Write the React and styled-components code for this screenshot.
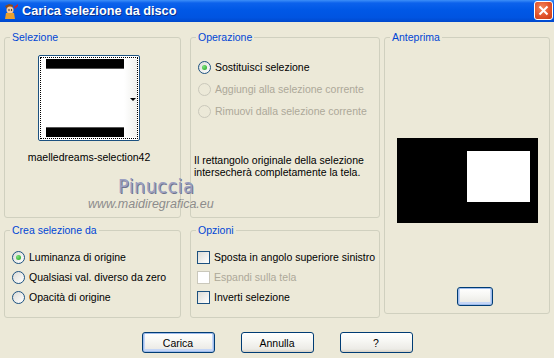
import React from "react";
import styled, { createGlobalStyle, css } from "styled-components";

const Global = createGlobalStyle`
  html, body { margin: 0; padding: 0; background: #ECE9D8; }
  body { font-family: "Liberation Sans", Arial, sans-serif; font-size: 10.5px; color: #000; }
`;

const Window = styled.div`
  position: relative;
  width: 554px;
  height: 358px;
  background: #ECE9D8;
  display: flex;
  flex-direction: column;
  overflow: hidden;
`;

const TitleBar = styled.div`
  height: 22px;
  flex: none;
  display: flex;
  align-items: center;
  padding-left: 3px;
  gap: 3px;
  background: linear-gradient(#3d8ff8 0, #0c62ec 3px, #0058e6 45%, #0054e1 80%, #0048cc 100%);
`;

const Title = styled.div`
  flex: 1;
  color: #fff;
  font-weight: bold;
  font-size: 12.7px;
  text-shadow: 1px 1px 0 #0a2f8a;
  white-space: nowrap;
`;

const CloseButton = styled.div`
  width: 17px;
  height: 17px;
  margin-right: 1px;
  margin-top: -2px;
  border: 1px solid #fff;
  border-radius: 3px;
  background: radial-gradient(circle at 40% 35%, #f2885f 0, #e2522a 55%, #c63a12 100%);
  display: flex;
  align-items: center;
  justify-content: center;
`;

const Body = styled.div`
  flex: 1;
  display: flex;
  flex-direction: column;
  padding: 8px 0 0 4px;
`;

const Grid = styled.div`
  display: grid;
  grid-template-columns: 186px 194px 166px;
  grid-template-rows: 188px 95px;
  row-gap: 5px;
`;

const Group = styled.fieldset`
  margin: 0;
  padding: 0 6px;
  border: 1px solid #D0D0BF;
  border-radius: 3px;
  box-sizing: border-box;
  min-width: 0;
  width: ${(p) => p.$w}px;
  height: ${(p) => p.$h}px;
  display: flex;
  flex-direction: column;
  ${(p) => p.$span && css`grid-row: 1 / span 2; grid-column: 3;`}
`;

const Legend = styled.legend`
  margin-left: -1px;
  padding: 0 2px;
  color: #0046D5;
  line-height: 14px;
  font-size: 10.5px;
`;

const SelContent = styled.div`
  display: flex;
  flex-direction: column;
  align-items: center;
  padding-right: 7px;
  padding-top: 11px;
`;

const Thumb = styled.div`
  width: 102px;
  height: 86px;
  box-sizing: border-box;
  border: 1px solid #1C5180;
  border-radius: 2px;
  background: #fff;
  padding: 1px;
`;

const ThumbInner = styled.div`
  height: 100%;
  box-sizing: border-box;
  border: 1px dotted #000;
  display: flex;
  padding: 1px 0 1px 5px;
`;

const ThumbImage = styled.div`
  width: 78px;
  display: flex;
  flex-direction: column;
  justify-content: space-between;
`;

const Bar = styled.div`
  height: 9px;
  background: #000;
  border-${(p) => (p.$bottom ? "top" : "bottom")}: 1px solid #555;
`;

const ThumbSide = styled.div`
  flex: 1;
  background: linear-gradient(90deg, #ffffff, #f0f0ec);
  display: flex;
  align-items: center;
  justify-content: flex-end;
  padding-right: 1px;
`;

const Arrow = styled.div`
  width: 0;
  height: 0;
  border-left: 3px solid transparent;
  border-right: 3px solid transparent;
  border-top: 3px solid #000;
  margin-top: 2px;
`;

const FileName = styled.div`
  margin-top: 9px;
  line-height: 14px;
`;

const Options = styled.div`
  display: flex;
  flex-direction: column;
  padding-top: ${(p) => p.$top}px;
`;

const Row = styled.label`
  display: flex;
  align-items: center;
  gap: 4px;
  height: ${(p) => p.$h}px;
  color: ${(p) => (p.$disabled ? "#ACA899" : "#000")};
  white-space: nowrap;
`;

const Radio = styled.span`
  width: 13px;
  height: 13px;
  box-sizing: border-box;
  border-radius: 50%;
  border: 1px solid ${(p) => (p.$disabled ? "#CAC8BB" : "#1C5180")};
  background: ${(p) => (p.$disabled ? "transparent" : "linear-gradient(135deg, #dcdcd7, #ffffff)")};
  display: flex;
  align-items: center;
  justify-content: center;
  flex: none;
  margin-left: 1px;
`;

const Dot = styled.span`
  width: 5px;
  height: 5px;
  border-radius: 50%;
  background: radial-gradient(circle at 35% 35%, #7be27a, #21a121);
`;

const Check = styled.span`
  width: 13px;
  height: 13px;
  box-sizing: border-box;
  border: 1px solid ${(p) => (p.$disabled ? "#CAC8BB" : "#1C5180")};
  background: ${(p) => (p.$disabled ? "#fff" : "linear-gradient(135deg, #dcdcd7, #ffffff)")};
  flex: none;
`;

const Note = styled.p`
  margin: 32px 0 0 -3px;
  line-height: 12px;
`;

const PreviewContent = styled.div`
  display: flex;
  flex-direction: column;
  align-items: center;
  padding-top: 94px;
`;

const PreviewBox = styled.div`
  width: 141px;
  height: 85px;
  background: #000;
  display: flex;
  padding: 13px 0 0 70px;
  box-sizing: border-box;
`;

const PreviewSel = styled.div`
  width: 63px;
  height: 51px;
  background: #fff;
`;

const XPButton = styled.button`
  font-family: "Liberation Sans", Arial, sans-serif;
  font-size: 10.5px;
  color: #000;
  width: ${(p) => p.$w}px;
  height: ${(p) => p.$h}px;
  padding: 0;
  border: 1px solid #003C74;
  border-radius: 3px;
  background: linear-gradient(#ffffff 0, #f7f7f4 40%, #ecebe6 85%, #d6d0c5 100%);
  box-shadow: ${(p) => (p.$default ? "inset 0 0 0 1px #9fbcec, inset 0 -1px 0 2px #c5d6f6" : "none")};
`;

const SmallButton = styled(XPButton)`
  margin-top: 64px;
  margin-left: 16px;
`;

const ButtonRow = styled.div`
  display: flex;
  justify-content: center;
  gap: 26px;
  margin-top: 14px;
  margin-left: -4px;
`;

const Watermark = styled.div`
  position: absolute;
  left: 88px;
  top: 176px;
  display: flex;
  flex-direction: column;
  align-items: flex-start;
  pointer-events: none;
`;

const WmName = styled.div`
  font-family: "DejaVu Sans Condensed", "DejaVu Sans", sans-serif;
  font-size: 19.5px;
  color: #9a9fc0;
  text-shadow: 1px 1px 0 #6f7390;
  line-height: 22px;
  margin-left: 30px;
  letter-spacing: 0.5px;
`;

const WmUrl = styled.div`
  font-size: 12.5px;
  font-style: italic;
  color: #8c8c8c;
  line-height: 13px;
`;

const AppIcon = () => (
  <svg width="16" height="16" viewBox="0 0 16 16">
    <path d="M2 3 L6 1 L10 2 L9 6 L4 6 Z" fill="#8a4a1c" />
    <ellipse cx="7" cy="7" rx="3.5" ry="3.5" fill="#f3c9a0" />
    <path d="M3 10 L11 10 L12 16 L2 16 Z" fill="#e8a030" />
    <path d="M11 4 L15 1 L15 3 L12 6 Z" fill="#d02020" />
    <circle cx="6" cy="7" r="0.7" fill="#000" />
    <circle cx="8.5" cy="7" r="0.7" fill="#000" />
  </svg>
);

export default function App() {
  return (
    <>
      <Global />
      <Window>
        <TitleBar>
          <AppIcon />
          <Title>Carica selezione da disco</Title>
          <CloseButton>
            <svg width="11" height="11" viewBox="0 0 11 11">
              <path d="M1.5 1.5 L9.5 9.5 M9.5 1.5 L1.5 9.5" stroke="#fff" strokeWidth="2" />
            </svg>
          </CloseButton>
        </TitleBar>
        <Body>
          <Grid>
            <Group $w={177} $h={188}>
              <Legend>Selezione</Legend>
              <SelContent>
                <Thumb>
                  <ThumbInner>
                    <ThumbImage>
                      <Bar />
                      <Bar $bottom />
                    </ThumbImage>
                    <ThumbSide>
                      <Arrow />
                    </ThumbSide>
                  </ThumbInner>
                </Thumb>
                <FileName>maelledreams-selection42</FileName>
              </SelContent>
            </Group>
            <Group $w={190} $h={188}>
              <Legend>Operazione</Legend>
              <Options $top={12}>
                <Row $h={22}>
                  <Radio><Dot /></Radio>Sostituisci selezione
                </Row>
                <Row $h={22} $disabled>
                  <Radio $disabled />Aggiungi alla selezione corrente
                </Row>
                <Row $h={22} $disabled>
                  <Radio $disabled />Rimuovi dalla selezione corrente
                </Row>
              </Options>
              <Note>
                Il rettangolo originale della selezione
                <br />
                intersecherà completamente la tela.
              </Note>
            </Group>
            <Group $w={166} $h={284} $span>
              <Legend>Anteprima</Legend>
              <PreviewContent>
                <PreviewBox>
                  <PreviewSel />
                </PreviewBox>
                <SmallButton $w={36} $h={19} $default />
              </PreviewContent>
            </Group>
            <Group $w={177} $h={95}>
              <Legend>Crea selezione da</Legend>
              <Options $top={10}>
                <Row $h={20}>
                  <Radio><Dot /></Radio>Luminanza di origine
                </Row>
                <Row $h={20}>
                  <Radio />Qualsiasi val. diverso da zero
                </Row>
                <Row $h={20}>
                  <Radio />Opacità di origine
                </Row>
              </Options>
            </Group>
            <Group $w={190} $h={95}>
              <Legend>Opzioni</Legend>
              <Options $top={10}>
                <Row $h={20}>
                  <Check />Sposta in angolo superiore sinistro
                </Row>
                <Row $h={20} $disabled>
                  <Check $disabled />Espandi sulla tela
                </Row>
                <Row $h={20}>
                  <Check />Inverti selezione
                </Row>
              </Options>
            </Group>
          </Grid>
          <ButtonRow>
            <XPButton $w={73} $h={21} $default>Carica</XPButton>
            <XPButton $w={73} $h={21}>Annulla</XPButton>
            <XPButton $w={73} $h={21}>?</XPButton>
          </ButtonRow>
        </Body>
        <Watermark>
          <WmName>Pinuccia</WmName>
          <WmUrl>www.maidiregrafica.eu</WmUrl>
        </Watermark>
      </Window>
    </>
  );
}
